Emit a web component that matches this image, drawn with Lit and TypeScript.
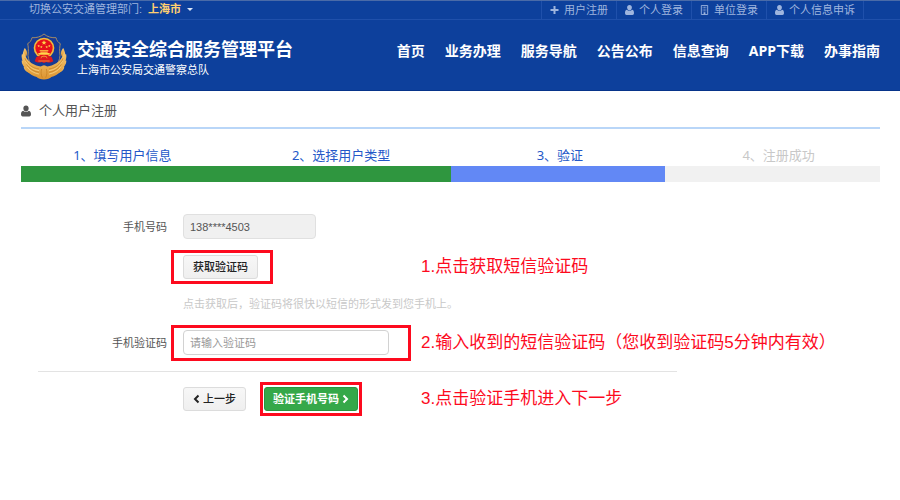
import { LitElement, html, css, svg } from "lit";
import { customElement, state } from "lit/decorators.js";

const userIcon = html`<svg class="icon" viewBox="0 0 18 20" aria-hidden="true">
  <path fill="currentColor" d="M9 0c3 0 4.800 2.200 4.800 5.200S12 11 9 11 4.200 8.200 4.200 5.200 6 0 9 0zM4 9.600C5.400 11.200 7.200 12 9 12s3.600-.8 5-2.400C17 10 18 12.600 18 16c0 2.400-1.200 4-3 4H3c-1.800 0-3-1.600-3-4 0-3.400 1-6 4-6.400z"/>
</svg>`;

const plusIcon = html`<svg class="icon" viewBox="0 0 18 20" aria-hidden="true">
  <path fill="currentColor" d="M7 2h4v6h6v4h-6v6H7v-6H1V8h6z"/>
</svg>`;

const buildingIcon = html`<svg class="icon" viewBox="0 0 18 22" aria-hidden="true">
  <path fill="none" stroke="currentColor" stroke-width="2" d="M2 1h14v20H2z"/>
  <path fill="currentColor" d="M5 4h2v2H5zM8 4h2v2H8zM11 4h2v2h-2zM5 8h2v2H5zM8 8h2v2H8zM11 8h2v2h-2zM5 12h2v2H5zM8 12h2v2H8zM11 12h2v2h-2zM7 16h4v5H7z"/>
</svg>`;

const leaf = (x: number, y: number, r: number) =>
  svg`<path transform="translate(${x} ${y}) rotate(${r})" d="M0 0C-7-7-7-18 0-27 7-18 7-7 0 0z"/>`;

const star = (x: number, y: number, s: number) =>
  svg`<path fill="#ffd84a" transform="translate(${x} ${y}) scale(${s})" d="M0-5 1.300-1.600 5-1.500 2.100.8 3.100 4.300 0 2.200-3.100 4.300-2.100.8-5-1.500-1.300-1.600z"/>`;

const emblem = html`<svg class="emblem" viewBox="0 0 138 144" role="img" aria-label="警徽">
  <defs>
    <linearGradient id="gold" x1="0" y1="0" x2="0" y2="1">
      <stop offset="0" stop-color="#f6c874"/>
      <stop offset="1" stop-color="#dc9430"/>
    </linearGradient>
  </defs>
  <path fill="#173a94" stroke="#a08a68" stroke-width="3" d="M69 3C59 12 45 15 33 14c-2 9-7 15-13 18 2 8 3 20 1 35 2 28 21 46 48 57 27-11 46-29 48-57-2-15-1-27 1-35-6-3-11-9-13-18C93 15 79 12 69 3z"/>
  <g fill="url(#gold)">
    ${leaf(14, 72, -6)}${leaf(13, 88, -22)}${leaf(18, 104, -36)}${leaf(28, 119, -48)}
    ${leaf(124, 72, 6)}${leaf(125, 88, 22)}${leaf(120, 104, 36)}${leaf(110, 119, 48)}
    <path d="M8 54c6 26 22 40 47 46 6 2 10-3 14-3s8 5 14 3c25-6 41-20 47-46 9 22 4 46-10 61-8 9-20 15-29 17-7 10-37 10-44 0-9-2-21-8-29-17C4 100-1 76 8 54z"/>
  </g>
  <path fill="none" stroke="#fbdc92" stroke-width="2" d="M14 84c8 16 22 26 40 29M18 101c8 12 20 19 36 22M124 84c-8 16-22 26-40 29M120 101c-8 12-20 19-36 22"/>
  <path fill="none" stroke="#c27c1e" stroke-width="2" d="M12 76c7 18 22 29 42 32M17 94c8 13 20 21 37 24M126 76c-7 18-22 29-42 32M121 94c-8 13-20 21-37 24M62 108c-3 8-2 18 2 26M76 108c3 8 2 18-2 26"/>
  <circle cx="69" cy="45" r="31" fill="#f0bd3c"/>
  <circle cx="69" cy="45" r="26" fill="#e6101a"/>
  ${star(69, 29, 1.5)}${star(53, 39, 0.8)}${star(61, 42, 0.8)}${star(77, 42, 0.8)}${star(85, 39, 0.8)}
  <path fill="#ffd84a" d="M56 52h26v3H56zM58 56h22v3H58zM52 60h34v5H52z"/>
  <path fill="#dc1820" d="M46 72c8-5 14-3 23 1 9-4 15-6 23-1l5 13c-8 5-15 4-21 2l-7 3-7-3c-6 2-13 3-21-2z"/>
  <path fill="none" stroke="#f4b73a" stroke-width="2" d="M60 76a9 7 0 0 1 18 0M52 84h34"/>
</svg>`;

@customElement("app-root")
export class AppRoot extends LitElement {
  @state() private code = "";

  private topLinks = [
    { icon: plusIcon, text: "用户注册" },
    { icon: userIcon, text: "个人登录" },
    { icon: buildingIcon, text: "单位登录" },
    { icon: userIcon, text: "个人信息申诉" },
  ];

  private nav = ["首页", "业务办理", "服务导航", "公告公布", "信息查询", "APP下载", "办事指南"];

  private steps = [
    { text: "1、填写用户信息", status: "done" },
    { text: "2、选择用户类型", status: "done" },
    { text: "3、验证", status: "current" },
    { text: "4、注册成功", status: "todo" },
  ];

  static styles = css`
    :host {
      display: block;
      min-height: 100vh;
      background: #fff;
      color: #555;
      font: 11px/16px "Liberation Sans", "Noto Sans CJK SC", sans-serif;
    }
    * { box-sizing: border-box; }
    a { color: inherit; text-decoration: none; }
    button, input { font: inherit; margin: 0; }
    .icon { width: 9px; height: 10px; flex: none; }

    header { background: #0d409c; border-bottom: 1px solid #07348a; }
    .topbar {
      display: flex;
      justify-content: space-between;
      height: 20px;
      padding: 0 36px 0 29px;
      border-top: 1px solid #4a6ba8;
      border-bottom: 1px solid #1f50ab;
      color: #9fb5de;
    }
    .dept { display: flex; gap: 6px; }
    .city {
      display: flex;
      align-items: center;
      gap: 6px;
      height: 16px;
      padding: 0;
      border: 0;
      background: none;
      color: #ffd071;
      font-weight: 700;
    }
    .caret {
      border: 3px solid transparent;
      border-top-color: #dbe5f7;
      border-bottom: 0;
    }
    .toplinks { display: flex; border-right: 1px solid #1f50ab; }
    .toplinks a {
      display: flex;
      align-items: center;
      gap: 5px;
      padding: 0 8px;
      border-left: 1px solid #1f50ab;
    }
    .masthead {
      display: flex;
      align-items: center;
      justify-content: space-between;
      height: 70px;
      padding: 0 20px 0 21px;
      color: #fff;
    }
    .brand { display: flex; align-items: center; gap: 10px; }
    .emblem { width: 46px; height: 48px; margin-top: 4px; }
    .titles { padding-top: 6px; }
    h1 { margin: 0; font-size: 18px; line-height: 24px; font-weight: 700; }
    .brand p { margin: 0; }
    nav {
      display: flex;
      gap: 20px;
      padding-bottom: 8px;
      font: 700 14px/20px "Open Sans", "Noto Sans CJK SC", sans-serif;
    }

    main { padding: 0 20px 0 21px; }
    h2 {
      display: flex;
      align-items: center;
      gap: 8px;
      height: 38px;
      margin: 0;
      padding-top: 4px;
      border-bottom: 2px solid #b9d6f8;
      font-size: 13px;
      font-weight: 400;
    }
    h2 .icon { width: 10px; height: 12px; }
    .steps {
      display: flex;
      margin: 15px -8px 0;
      padding: 0;
      list-style: none;
      font: 13px/22px "Noto Sans", "Noto Sans CJK SC", sans-serif;
      color: #2458c8;
    }
    .steps li { flex: 1; text-align: center; }
    .steps .todo { color: #c8c8c8; }
    .bar { display: flex; height: 16px; background: #f1f1f1; }
    .bar span { flex: 1; }
    .bar .done { background: #2f963f; }
    .bar .current { background: #6288f5; }

    form { padding-top: 32px; }
    .row {
      display: grid;
      grid-template-columns: 146px 222px 1fr;
      column-gap: 16px;
      align-items: center;
    }
    .row > label { text-align: right; }
    .field { grid-column: 2; display: flex; align-items: center; }
    .note {
      color: #fd0a1e;
      font-size: 17px;
      line-height: 24px;
      white-space: nowrap;
      margin: 0;
    }
    .mark { flex: none; display: flex; border: 3px solid #fd0a1e; }
    .mark-field { margin-left: -12px; padding: 2px 9px; }
    .mark-wide { width: 240px; padding-bottom: 3px; }
    .mark-get { padding-right: 12px; }
    .mark-next { padding: 2px 1px; margin-left: 14px; }
    input {
      height: 25px;
      padding: 0 6px;
      border: 1px solid #d2d2d2;
      border-radius: 4px;
      background: #fff;
      color: #555;
      outline: none;
    }
    input::placeholder { color: #999; opacity: 1; }
    .phone { width: 133px; background: #f0f0f0; border-color: #e0e0e0; }
    .code { width: 206px; }
    .btn {
      display: flex;
      align-items: center;
      justify-content: center;
      gap: 3px;
      height: 24px;
      padding: 0 9px;
      border: 1px solid #dcdcdc;
      border-radius: 3px;
      background: linear-gradient(#f7f7f7, #efefef);
      color: #222;
      font-weight: 500;
      white-space: nowrap;
    }
    .btn svg { width: 7px; height: 10px; flex: none; }
    .btn path { fill: none; stroke: currentColor; stroke-width: 4; }
    .primary {
      padding: 0 8px;
      border-color: #2b9440;
      background: #35a849;
      color: #fff;
      font-weight: 700;
    }
    .mt { margin-top: 11px; }
    .help {
      margin: 12px 0 13px;
      padding-left: 162px;
      color: #c8c8c8;
    }
    hr {
      width: calc(75% - 5px);
      height: 1px;
      margin: 10px 0 10px 17px;
      border: 0;
      background: #e3e3e3;
    }
  `;

  render() {
    return html`
      <header>
        <div class="topbar">
          <div class="dept">
            <span>切换公安交通管理部门:</span>
            <button class="city" type="button">上海市<span class="caret"></span></button>
          </div>
          <div class="toplinks">
            ${this.topLinks.map((l) => html`<a href="#">${l.icon}${l.text}</a>`)}
          </div>
        </div>
        <div class="masthead">
          <div class="brand">
            ${emblem}
            <div class="titles">
              <h1>交通安全综合服务管理平台</h1>
              <p>上海市公安局交通警察总队</p>
            </div>
          </div>
          <nav>${this.nav.map((n) => html`<a href="#">${n}</a>`)}</nav>
        </div>
      </header>
      <main>
        <h2>${userIcon}个人用户注册</h2>
        <ol class="steps">
          ${this.steps.map((s) => html`<li class=${s.status}>${s.text}</li>`)}
        </ol>
        <div class="bar">
          ${this.steps.map((s) => html`<span class=${s.status}></span>`)}
        </div>
        <form @submit=${(e: Event) => e.preventDefault()}>
          <div class="row">
            <label for="phone">手机号码</label>
            <div class="field">
              <input id="phone" class="phone" type="text" value="138****4503" readonly />
            </div>
          </div>
          <div class="row mt">
            <div class="field">
              <div class="mark mark-field mark-get">
                <button class="btn" type="button">获取验证码</button>
              </div>
            </div>
            <p class="note">1.点击获取短信验证码</p>
          </div>
          <p class="help">点击获取后，验证码将很快以短信的形式发到您手机上。</p>
          <div class="row">
            <label for="code">手机验证码</label>
            <div class="field">
              <div class="mark mark-field mark-wide">
                <input
                  id="code"
                  class="code"
                  type="text"
                  placeholder="请输入验证码"
                  .value=${this.code}
                  @input=${(e: Event) => (this.code = (e.target as HTMLInputElement).value)}
                />
              </div>
            </div>
            <p class="note">2.输入收到的短信验证码（您收到验证码5分钟内有效）</p>
          </div>
          <hr />
          <div class="row">
            <div class="field">
              <button class="btn" type="button">
                <svg viewBox="0 0 14 20" aria-hidden="true"><path d="M11 3 4 10l7 7"/></svg>上一步
              </button>
              <div class="mark mark-next">
                <button class="btn primary" type="submit">
                  验证手机号码<svg viewBox="0 0 14 20" aria-hidden="true"><path d="M3 3l7 7-7 7"/></svg>
                </button>
              </div>
            </div>
            <p class="note">3.点击验证手机进入下一步</p>
          </div>
        </form>
      </main>
    `;
  }
}
